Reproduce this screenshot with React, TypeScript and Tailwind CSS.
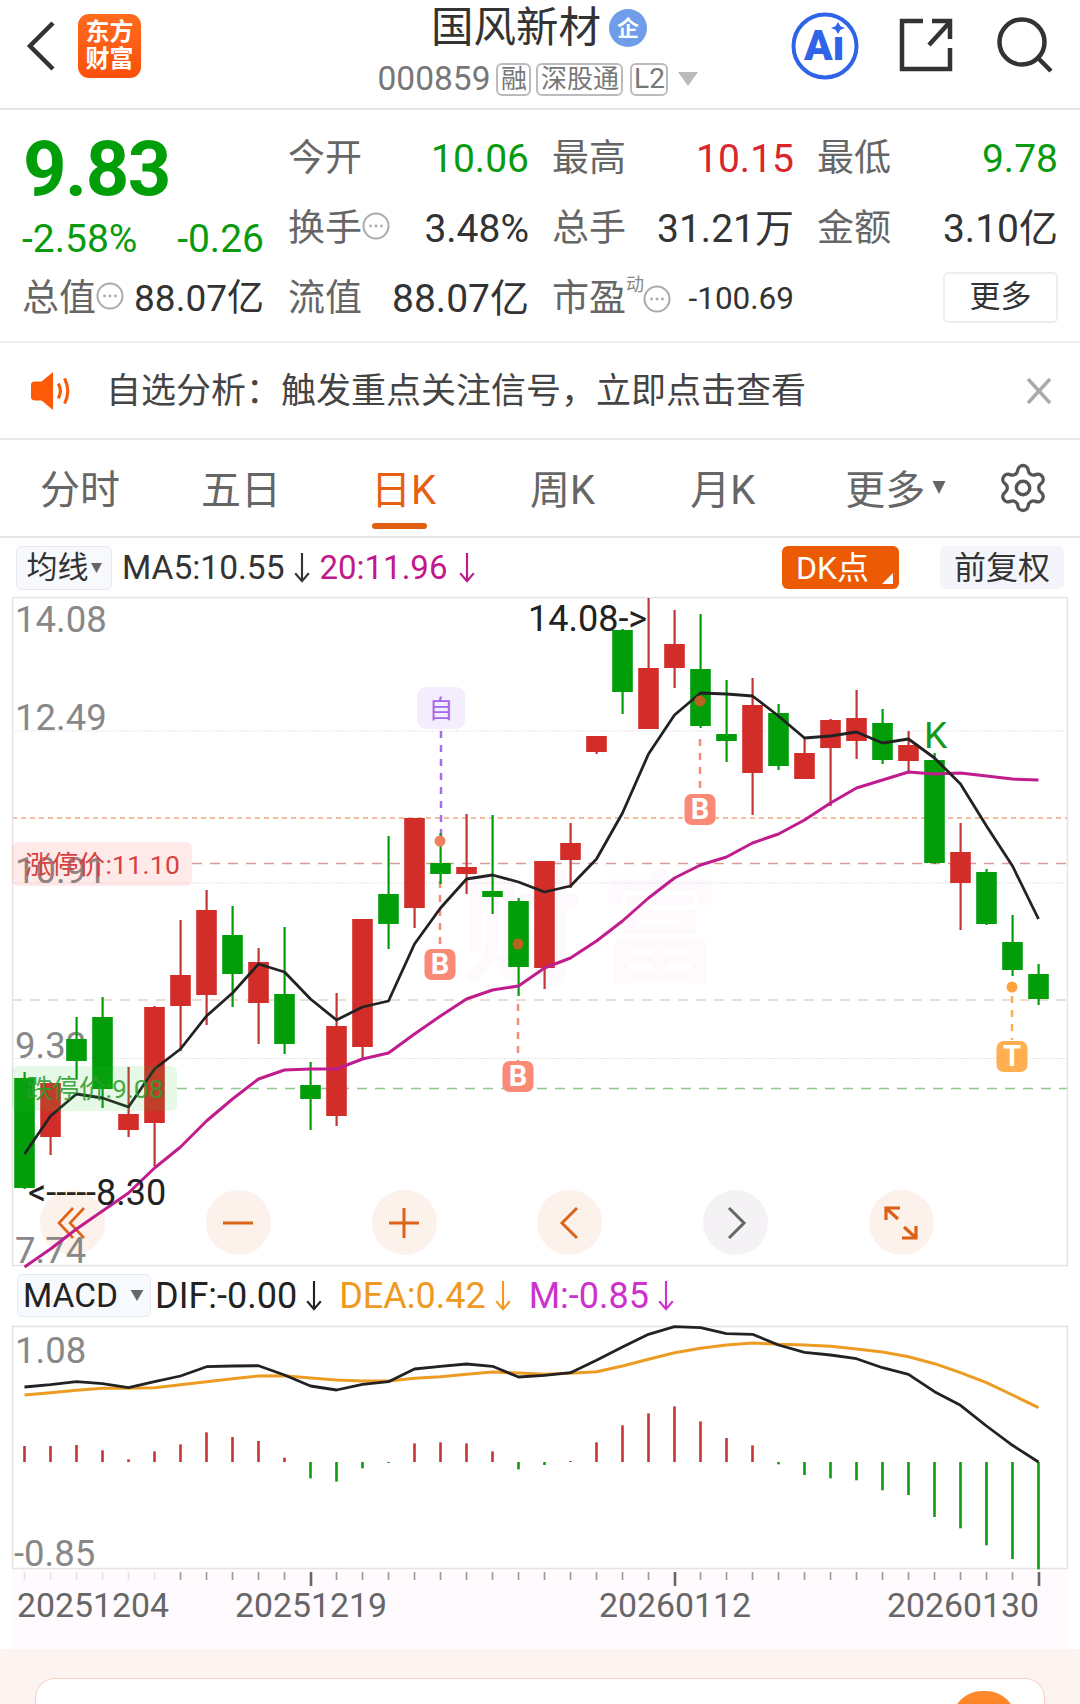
import React from "react";
import { Settings } from "lucide-react";

type C = [number, number, number, number, "r" | "g"];
const candles: C[] = [
  [1077, 1187, 1071, 1188, "g"], [1082, 1136, 1081, 1154, "r"], [1038, 1060, 1016, 1077, "g"], [1016, 1088, 996, 1107, "g"],
  [1113, 1129, 1066, 1136, "r"], [1006, 1122, 1005, 1165, "r"], [974, 1005, 919, 1050, "r"], [909, 994, 889, 1024, "r"],
  [934, 973, 905, 1006, "g"], [961, 1002, 947, 1043, "r"], [993, 1043, 926, 1053, "g"], [1084, 1098, 1061, 1129, "g"],
  [1025, 1115, 992, 1125, "r"], [918, 1046, 918, 1058, "r"], [893, 923, 835, 948, "g"], [817, 907, 817, 927, "r"],
  [862, 873, 832, 883, "g"], [866, 873, 813, 893, "r"], [890, 896, 814, 913, "g"], [900, 966, 897, 995, "g"],
  [860, 967, 860, 988, "r"], [842, 859, 822, 887, "r"], [735, 751, 735, 753, "r"], [629, 691, 628, 713, "g"],
  [667, 728, 597, 728, "r"], [643, 667, 609, 687, "r"], [668, 725, 613, 727, "g"], [733, 740, 679, 761, "g"],
  [704, 772, 677, 814, "r"], [712, 765, 703, 769, "g"], [752, 778, 737, 778, "r"], [719, 747, 718, 805, "r"],
  [717, 740, 689, 758, "r"], [722, 759, 708, 763, "g"], [744, 760, 730, 771, "r"], [759, 862, 752, 863, "g"],
  [851, 882, 822, 929, "r"], [871, 923, 868, 924, "g"], [941, 969, 914, 975, "g"], [973, 998, 963, 1004, "g"],
];
const ma5 = [1153, 1115, 1093, 1097, 1106, 1068, 1048, 1015, 992, 963, 971, 998, 1019, 1006, 1000, 943, 907, 878, 874, 881, 891, 885, 858, 812, 753, 714, 692, 693, 695, 715, 737, 735, 731, 742, 738, 757, 783, 825, 865, 918];
const ma20 = [1266, 1248, 1228, 1210, 1192, 1167, 1146, 1120, 1098, 1078, 1069, 1068, 1068, 1058, 1052, 1033, 1015, 998, 989, 985, 967, 957, 940, 920, 897, 877, 864, 856, 842, 833, 819, 802, 787, 779, 771, 773, 772, 775, 778, 779];
const bars = [525, 525, 522, 538, 565, 541, 520, 484, 498, 510, 560, 622, 632, 592, 573, 517, 514, 517, 541, 595, 582, 570, 514, 463, 427, 406, 451, 501, 523, 580, 612, 622, 628, 658, 672, 738, 772, 823, 864, 895];
const dif = [348, 341, 332, 338, 350, 332, 315, 287, 285, 284, 312, 345, 357, 340, 332, 294, 286, 279, 286, 318, 313, 305, 268, 228, 190, 167, 170, 188, 190, 222, 244, 252, 263, 290, 310, 362, 403, 465, 523, 573];
const dea = [372, 365, 358, 352, 352, 350, 341, 332, 323, 315, 314, 321, 327, 330, 330, 322, 317, 310, 303, 306, 310, 307, 302, 285, 265, 245, 232, 222, 216, 220, 222, 226, 234, 243, 257, 278, 305, 335, 372, 410];
const X = (i: number) => 24.5 + 26 * i;
const RED = "#d32d2a";
const GREEN = "#019e0a";
const pts = (a: number[], f: (v: number) => number = (v) => v) => a.map((v, i) => `${X(i)},${f(v).toFixed(1)}`).join(" ");
const macdY = (v: number) => 1270 + v / 3;

function Info({ className }: { className: string }) {
  return (
    <svg viewBox="0 0 28 28" className={className}>
      <circle cx="14" cy="14" r="12.5" fill="none" stroke="#aaaaaa" strokeWidth="2" />
      <circle cx="8.5" cy="14" r="1.4" fill="#aaaaaa" />
      <circle cx="14" cy="14" r="1.4" fill="#aaaaaa" />
      <circle cx="19.5" cy="14" r="1.4" fill="#aaaaaa" />
    </svg>
  );
}
function Arrow({ color }: { color: string }) {
  return (
    <svg viewBox="0 0 18 34" className="h-[33px] w-[18px] shrink-0">
      <path d="M9 2V31M2 23L9 31L16 23" fill="none" stroke={color} strokeWidth="2.2" />
    </svg>
  );
}
function Tag({ children, className }: { children: React.ReactNode; className: string }) {
  return <span className={`flex h-[33px] shrink-0 items-center justify-center whitespace-nowrap rounded-[6px] border-2 border-[#bbbbbb] leading-none text-[#777777] ${className}`}>{children}</span>;
}
function Stat({ label, value, color }: { label: string; value: string; color: string }) {
  return (
    <div className="flex items-center justify-between">
      <span className="text-[37px] text-[#666666]">{label}</span>
      <span className={`text-[39px] ${color}`}>{value}</span>
    </div>
  );
}
function Marker({ x, y, letter, fill }: { x: number; y: number; letter: string; fill: string }) {
  return (
    <g>
      <rect x={x - 15.5} y={y} width="31" height="31" rx="7" fill={fill} />
      <text x={x} y={y + 25} textAnchor="middle" fontSize="29" fontWeight="700" fill="#ffffff">{letter}</text>
    </g>
  );
}
function Axis({ x, y, t, color = "#888888", size = 36.5 }: { x: number; y: number; t: string; color?: string; size?: number }) {
  return <text x={x} y={y} fontSize={size} fill={color}>{t}</text>;
}

function PriceChart() {
  return (
    <svg viewBox="0 596 1080 669" className="relative block h-[669px] w-[1080px] overflow-visible">
      <text x="462" y="972" fontSize="120" fontWeight="700" letterSpacing="18" fill="#fdf9fd">财富</text>
      {[730, 882, 1057.5].map((y) => (
        <line key={y} x1="12" x2="1067" y1={y} y2={y} stroke="#dddddd" strokeWidth="1" strokeDasharray="1.5 1.5" />
      ))}
      <line x1="12" x2="1067" y1="817" y2="817" stroke="#eba97f" strokeWidth="1.5" strokeDasharray="5 4" />
      <line x1="192" x2="1067" y1="862.5" y2="862.5" stroke="#d99a9a" strokeWidth="1.5" strokeDasharray="10 8" />
      <line x1="12" x2="1067" y1="999" y2="999" stroke="#e3d3c2" strokeWidth="1.5" strokeDasharray="10 8" />
      <line x1="177" x2="1067" y1="1087.5" y2="1087.5" stroke="#8fc98f" strokeWidth="1.5" strokeDasharray="10 8" />
      <rect x="12.5" y="596.5" width="1055" height="668" fill="none" stroke="#e4e4e4" strokeWidth="1.5" />

      <Axis x={15} y={631} t="14.08" />
      <Axis x={15} y={729} t="12.49" />
      <Axis x={15} y={882} t="10.91" />
      <Axis x={15} y={1057} t="9.32" />
      <Axis x={15} y={1262} t="7.74" />

      <line x1="441" x2="441" y1="730" y2="838" stroke="#a76bee" strokeWidth="2.5" strokeDasharray="7 7" />
      <line x1="440" x2="440" y1="880" y2="946" stroke="#f28d78" strokeWidth="2.5" strokeDasharray="7 7" />
      <line x1="518" x2="518" y1="1003" y2="1060" stroke="#f28d78" strokeWidth="2.5" strokeDasharray="7 7" />
      <line x1="700" x2="700" y1="738" y2="792" stroke="#f28d78" strokeWidth="2.5" strokeDasharray="7 7" />
      <line x1="1012" x2="1012" y1="995" y2="1039" stroke="#ffae52" strokeWidth="2.5" strokeDasharray="7 7" />

      {candles.map(([t, b, wt, wb, k], i) => {
        const c = k === "r" ? RED : GREEN;
        return (
          <g key={i}>
            <rect x={X(i) - 1} y={wt} width="2.2" height={wb - wt} fill={k === "r" ? "#c43535" : GREEN} />
            <rect x={X(i) - 10.3} y={t} width="20.6" height={b - t} fill={c} />
          </g>
        );
      })}

      <polyline points={pts(ma20)} fill="none" stroke="#c01c8e" strokeWidth="3" strokeLinejoin="round" />
      <polyline points={pts(ma5)} fill="none" stroke="#222222" strokeWidth="2.8" strokeLinejoin="round" />

      <circle cx="440" cy="840" r="5.5" fill="#f27f60" />
      <circle cx="518" cy="943" r="5.5" fill="#b8621f" />
      <circle cx="700" cy="700" r="5.5" fill="#b8621f" />
      <circle cx="1012" cy="986" r="5.5" fill="#ffa33c" />

      <rect x="417" y="686" width="48" height="42" rx="9" fill="#f3edfd" />
      <text x="441" y="717" textAnchor="middle" fontSize="25" fill="#a468ea">自</text>
      <Marker x={440} y={948} letter="B" fill="#fa8a75" />
      <Marker x={518} y={1060} letter="B" fill="#fa8a75" />
      <Marker x={700} y={793} letter="B" fill="#fa8a75" />
      <Marker x={1012} y={1040} letter="T" fill="#ffae52" />
      <text x="924" y="747" fontSize="37" fill="#129a1a">K</text>

      <rect x="12" y="841" width="180" height="44" rx="6" fill="#ff3c3c" fillOpacity="0.11" />
      <text x="25" y="873" fontSize="26.5" letterSpacing="0.3" fill="#d84040">涨停价:11.10</text>
      <rect x="12" y="1065" width="165" height="45" rx="6" fill="#2fc52f" fillOpacity="0.12" />
      <text x="26" y="1097" fontSize="26.5" fill="#2e9e2e" fillOpacity="0.9">跌停价:9.08</text>

      <text x="528" y="630" fontSize="36" fill="#222222">14.08-&gt;</text>
      <text x="28" y="1204" fontSize="36" fill="#222222">&lt;-----8.30</text>
    </svg>
  );
}

function MacdChart() {
  return (
    <svg viewBox="0 1325 1080 243" className="block h-[243px] w-[1080px] overflow-visible">
      <rect x="12.5" y="1325.500" width="1055" height="242" fill="none" stroke="#e4e4e4" strokeWidth="1.5" />
      <Axis x={15} y={1362} t="1.08" />
      <Axis x={14} y={1565} t="-0.85" />
      {bars.map((v, i) => {
        const y = macdY(v);
        const zero = 1461;
        const up = y < zero;
        return <rect key={i} x={X(i) - 1.3} y={up ? y : zero} width="2.6" height={Math.max(Math.abs(zero - y), 1)} fill={up ? "#c83434" : "#0f9a14"} />;
      })}
      <polyline points={pts(dea, macdY)} fill="none" stroke="#ec9c22" strokeWidth="3" strokeLinejoin="round" />
      <polyline points={pts(dif, macdY)} fill="none" stroke="#222222" strokeWidth="2.8" strokeLinejoin="round" />
    </svg>
  );
}

function DateAxis() {
  return (
    <div className="ml-[12px] h-[80px] w-[1055px] bg-[#fefafe]">
      <svg viewBox="12 1568 1055 80" className="block h-[80px] w-[1055px]">
        {candles.map((_, i) => {
          const big = i === 11 || i === 25 || i === 39;
          return <rect key={i} x={X(i) - 0.8} y="1571" width={big ? 2.6 : 1.6} height={big ? 14 : 8} fill={i < 6 ? "#e4e0e4" : big ? "#666666" : "#999999"} />;
        })}
        <Axis x={17} y={1616} t="20251204" color="#666666" size={33.8} />
        <Axis x={235} y={1616} t="20251219" color="#666666" size={33.8} />
        <Axis x={599} y={1616} t="20260112" color="#666666" size={33.8} />
        <Axis x={887} y={1616} t="20260130" color="#666666" size={33.8} />
      </svg>
    </div>
  );
}

function RoundBtn({ children, className = "bg-[#fdf1ec]" }: { children: React.ReactNode; className?: string }) {
  return <div className={`flex h-[65px] w-[65px] items-center justify-center rounded-full ${className}`}>{children}</div>;
}
const iconCls = "h-[34px] w-[34px]";

export default function App() {
  return (
    <div className="relative h-[1704px] w-[1080px] overflow-hidden bg-white [font-family:Roboto,'Noto_Sans_CJK_SC',sans-serif]">
      {/* header */}
      <header className="flex h-[110px] items-start border-b-2 border-[#e6e6e6]">
        <svg viewBox="0 0 30 50" className="ml-[26px] mt-[21px] h-[50px] w-[30px] shrink-0">
          <path d="M27 2L4 25L27 48" fill="none" stroke="#333333" strokeWidth="4.5" />
        </svg>
        <div className="ml-[22px] mt-[14px] flex h-[64px] w-[63px] shrink-0 flex-col items-center justify-center rounded-[11px] bg-gradient-to-b from-[#ff6a1c] to-[#fb4f0b] text-[24px] font-bold leading-[27px] text-white">
          <span>东方</span>
          <span>财富</span>
        </div>
        <div className="ml-[144px] flex w-[506px] shrink-0 flex-col items-center pt-[1px]">
          <div className="flex h-[54px] items-center pl-[2px]">
            <span className="text-[42.5px] leading-none text-[#333333]">国风新材</span>
            <span className="ml-[8px] flex h-[38px] w-[38px] items-center justify-center rounded-full bg-[#6f9de9] text-[22px] font-bold text-white">企</span>
          </div>
          <div className="mt-[7px] flex h-[34px] items-center">
            <span className="text-[33.5px] text-[#777777]">000859</span>
            <Tag className="ml-[6px] w-[35px] text-[26px]">融</Tag>
            <Tag className="ml-[5px] w-[87px] text-[26px]">深股通</Tag>
            <Tag className="ml-[7px] w-[38px] text-[28px]">L2</Tag>
            <svg viewBox="0 0 20 14" className="ml-[10px] h-[14px] w-[20px]"><path d="M0 0H20L10 14Z" fill="#bbbbbb" /></svg>
          </div>
        </div>
        <svg viewBox="0 0 68 68" className="mt-[12px] h-[68px] w-[68px] shrink-0">
          <circle cx="34" cy="34" r="31.5" fill="none" stroke="#2f63e8" strokeWidth="4" />
          <text x="13" y="48" fontSize="42" fontWeight="900" fill="#2f63e8">Aı</text>
          <path d="M47 13L49.500 18L54 20L49.500 22L47 27L44.500 22L40 20L44.500 18Z" fill="#2f63e8" transform="translate(0 -1) scale(1 .85)" />
        </svg>
        <svg viewBox="0 0 54 54" className="ml-[40px] mt-[18px] h-[54px] w-[54px] shrink-0">
          <path d="M24 3H3V51H51V30M30 27L50 5M33 3H51V21" fill="none" stroke="#333333" strokeWidth="4.5" />
        </svg>
        <svg viewBox="0 0 56 56" className="ml-[44px] mt-[17px] h-[56px] w-[56px] shrink-0">
          <circle cx="25" cy="25" r="22.500" fill="none" stroke="#333333" strokeWidth="4.5" />
          <path d="M41 41L54 54" stroke="#333333" strokeWidth="4.5" />
        </svg>
      </header>

      {/* stats */}
      <section className="grid h-[233px] grid-cols-[241px_241px_242px_241px] grid-rows-[70px_70px_70px] gap-x-[23px] border-b-2 border-[#efefef] pl-[24px] pt-[14px]">
        <div className="row-span-2 flex flex-col">
          <div className="-ml-[1px] mt-[9px] h-[72px] text-[76px] font-bold leading-[72px] tracking-[-1.5px] text-[#019e0a]">9.83</div>
          <div className="mt-[14px] flex items-center justify-between pr-[1px] text-[39px] leading-[40px] text-[#0a9a10]">
            <span className="-ml-[2px]">-2.58%</span>
            <span>-0.26</span>
          </div>
        </div>
        <Stat label="今开" value="10.06" color="text-[#0a9a10]" />
        <Stat label="最高" value="10.15" color="text-[#d9262c]" />
        <Stat label="最低" value="9.78" color="text-[#0a9a10]" />
        <div className="flex items-center">
          <span className="text-[37px] text-[#666666]">换手</span>
          <Info className="-mt-[6px] h-[28px] w-[28px]" />
          <span className="ml-auto text-[39px] text-[#333333]">3.48%</span>
        </div>
        <Stat label="总手" value="31.21万" color="text-[#333333]" />
        <Stat label="金额" value="3.10亿" color="text-[#333333]" />
        <div className="flex items-center">
          <span className="-ml-[2px] text-[37px] text-[#666666]">总值</span>
          <Info className="-mt-[6px] h-[28px] w-[28px]" />
          <span className="ml-auto pr-[1px] text-[37px] text-[#333333]">88.07亿</span>
        </div>
        <Stat label="流值" value="88.07亿" color="text-[#333333]" />
        <div className="flex items-center">
          <span className="text-[37px] text-[#666666]">市盈</span>
          <span className="mb-[28px] text-[18px] leading-none text-[#888888]">动</span>
          <Info className="-ml-[1px] h-[28px] w-[28px]" />
          <span className="ml-auto text-[31.5px] text-[#333333]">-100.69</span>
        </div>
        <div className="flex items-center justify-end">
          <span className="-mt-[4px] flex h-[51px] w-[115px] items-center justify-center rounded-[5px] border-2 border-[#eeeeee] text-[31px] text-[#333333]">更多</span>
        </div>
      </section>

      {/* notice */}
      <section className="flex h-[97px] items-center border-b-2 border-[#e9e9e9]">
        <svg viewBox="0 0 40 36" className="ml-[31px] h-[38px] w-[42px] shrink-0">
          <path d="M0 12Q0 9 4 9H10L21 0V36L10 27H4Q0 27 0 24Z" fill="#fd5a08" />
          <path d="M26 11Q30 18 26 25M32 6Q38 18 32 30" fill="none" stroke="#fd5a08" strokeWidth="3" />
        </svg>
        <span className="ml-[33px] pt-[2px] text-[35px] leading-none text-[#444444]">自选分析：触发重点关注信号，立即点击查看</span>
        <svg viewBox="0 0 26 26" className="ml-auto mr-[28px] h-[26px] w-[26px]">
          <path d="M2 1L24 25M24 1L2 25" stroke="#aaaaaa" strokeWidth="3.5" />
        </svg>
      </section>

      {/* tabs */}
      <nav className="relative flex h-[98px] items-center border-b-2 border-[#e6e6e6] pt-[5px] text-[40px] leading-none text-[#666666]">
        <span className="ml-[40px]">分时</span>
        <span className="ml-[81px]">五日</span>
        <span className="relative ml-[90px] text-[#e75f12]">
          日K
          <span className="absolute -bottom-[18px] left-[1px] h-[6px] w-[55px] rounded-full bg-[#e0600f]" />
        </span>
        <span className="ml-[94px]">周K</span>
        <span className="ml-[95px]">月K</span>
        <span className="ml-[90px]">更多</span>
        <svg viewBox="0 0 14 14" className="-mt-[6px] ml-[7px] h-[13px] w-[14px] shrink-0"><path d="M0 0H14L7 14Z" fill="#666666" /></svg>
        <Settings className="-mt-[5px] ml-[50px] h-[54px] w-[54px] shrink-0 text-[#555555]" strokeWidth={1.5} />
      </nav>

      {/* toolbar */}
      <div className="flex h-[59px] items-center text-[33.5px] leading-none">
        <div className="ml-[16px] flex h-[44px] w-[96px] items-center justify-center rounded-[5px] border border-[#e6e9f0] bg-[#f7f9fd] text-[31px] text-[#333333]">
          均线
          <svg viewBox="0 0 12 12" className="ml-[2px] h-[11px] w-[11px]"><path d="M0 1H12L6 12Z" fill="#666666" /></svg>
        </div>
        <span className="ml-[10px] text-[#333333]">MA5:10.55</span>
        <span className="ml-[9px]"><Arrow color="#333333" /></span>
        <span className="ml-[8px] text-[33px] text-[#c2188b]">20:11.96</span>
        <span className="ml-[11px]"><Arrow color="#c2188b" /></span>
        <div className="relative ml-auto flex h-[43px] w-[117px] items-center justify-center rounded-[6px] bg-[#ec5a04] pr-[16px] text-[32px] text-white">
          DK点
          <svg viewBox="0 0 12 12" className="absolute bottom-[5px] right-[6px] h-[11px] w-[11px]"><path d="M12 0V12H0Z" fill="#ffffff" /></svg>
        </div>
        <div className="ml-[41px] mr-[16px] flex h-[43px] w-[124px] items-center justify-center rounded-[5px] bg-[#f3f5fa] text-[32px] text-[#333333]">前复权</div>
      </div>

      {/* price chart */}
      <div className="relative h-[669px]">
        <div className="absolute bottom-[11px] left-[40px] flex gap-[100.8px]">
          <RoundBtn>
            <svg viewBox="0 0 34 34" className={iconCls}><path d="M17 2L3 17L17 32M28 2L14 17L28 32" fill="none" stroke="#dc6418" strokeWidth="2.6" /></svg>
          </RoundBtn>
          <RoundBtn>
            <svg viewBox="0 0 34 34" className={iconCls}><path d="M2 17H32" stroke="#dc6418" strokeWidth="3" /></svg>
          </RoundBtn>
          <RoundBtn>
            <svg viewBox="0 0 34 34" className={iconCls}><path d="M2 17H32M17 2V32" stroke="#dc6418" strokeWidth="3" /></svg>
          </RoundBtn>
          <RoundBtn>
            <svg viewBox="0 0 34 34" className={iconCls}><path d="M24 2L9 17L24 32" fill="none" stroke="#dc6418" strokeWidth="3" /></svg>
          </RoundBtn>
          <RoundBtn className="bg-[#f5f2f6]">
            <svg viewBox="0 0 34 34" className={iconCls}><path d="M10 2L25 17L10 32" fill="none" stroke="#666666" strokeWidth="3" /></svg>
          </RoundBtn>
          <RoundBtn>
            <svg viewBox="0 0 34 34" className={iconCls}><path d="M2 14V2H16M3 3L14 13M32 20V32H18M31 31L20 21" fill="none" stroke="#dc5f14" strokeWidth="3.2" /></svg>
          </RoundBtn>
        </div>
        <PriceChart />
      </div>

      {/* macd toolbar */}
      <div className="flex h-[60px] items-center pb-[1px] text-[36px] leading-none">
        <div className="ml-[17px] flex h-[43px] w-[134px] items-center rounded-[5px] border border-[#e6e9f0] bg-[#f6f9fd] pl-[5px] text-[33.5px] text-[#222222]">
          MACD
          <svg viewBox="0 0 14 12" className="ml-[12px] h-[11px] w-[14px]"><path d="M0 0H14L7 12Z" fill="#666666" /></svg>
        </div>
        <span className="ml-[4px] text-[#222222]">DIF:-0.00</span>
        <span className="ml-[8px]"><Arrow color="#222222" /></span>
        <span className="ml-[16px] text-[#ee9a22]">DEA:0.42</span>
        <span className="ml-[8px]"><Arrow color="#ee9a22" /></span>
        <span className="ml-[17px] text-[#cc33cc]">M:-0.85</span>
        <span className="ml-[8px]"><Arrow color="#cc33cc" /></span>
      </div>

      <MacdChart />
      <DateAxis />

      {/* footer */}
      <footer className="h-[56px] bg-[#fdf3f0] pt-[29px]">
        <div className="ml-[35px] flex h-[40px] w-[1010px] justify-end rounded-t-[20px] border border-[#f4cfc2] bg-white pr-[28px] pt-[12px]">
          <div className="h-[60px] w-[64px] rounded-full bg-gradient-to-b from-[#ff8a2c] to-[#fb6a14]" />
        </div>
      </footer>
    </div>
  );
}
